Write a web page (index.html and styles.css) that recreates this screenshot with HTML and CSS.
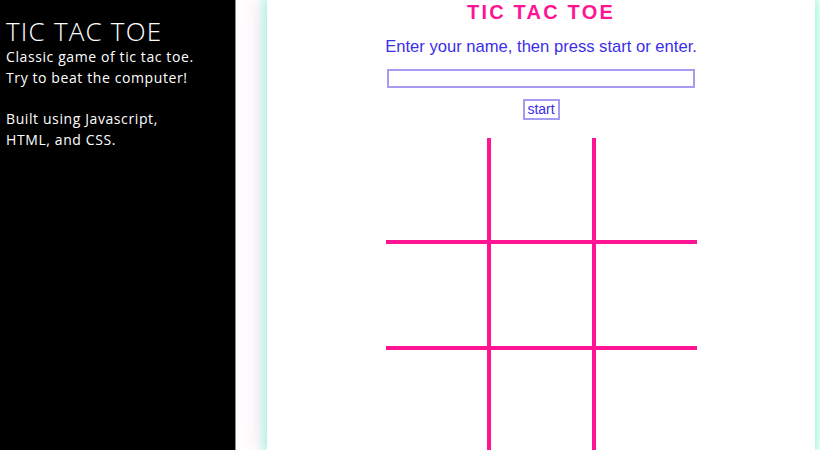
FILE: index.html
```html
<!DOCTYPE html>
<html>
<head>
<meta charset="utf-8">
<title>Tic Tac Toe</title>
<link rel="stylesheet" href="styles.css">
</head>
<body>
<aside class="sidebar">
  <h1 class="side-title">TIC TAC TOE</h1>
  <p class="side-text">Classic game of tic tac toe.<br>Try to beat the computer!</p>
  <p class="side-text">Built using Javascript,<br>HTML, and CSS.</p>
</aside>
<main class="stage">
  <section class="panel">
    <h2 class="game-title">TIC TAC TOE</h2>
    <p class="prompt">Enter your name, then press start or enter.</p>
    <input class="name-input" type="text">
    <button class="start-btn">start</button>
    <div class="board">
      <div class="cell"></div><div class="cell"></div><div class="cell"></div>
      <div class="cell"></div><div class="cell"></div><div class="cell"></div>
      <div class="cell"></div><div class="cell"></div><div class="cell"></div>
    </div>
  </section>
</main>
</body>
</html>
```

FILE: styles.css
```css
html, body {
  margin: 0;
  padding: 0;
  height: 100%;
  overflow: hidden;
  background: #ffffff;
}

body {
  display: flex;
}

.sidebar {
  width: 236px;
  flex: 0 0 236px;
  height: 100vh;
  background: #000000;
  border-right: 1px solid #8a8a8a;
  color: #ffffff;
  font-family: "Open Sans", sans-serif;
  padding: 17px 0 0 6px;
  box-sizing: border-box;
}

.side-title {
  margin: 0;
  font-size: 26px;
  font-weight: 300;
  line-height: 29px;
  letter-spacing: 1.2px;
}

.side-text {
  margin: 0 0 20px 0;
  font-size: 14px;
  line-height: 21px;
  font-weight: 400;
  letter-spacing: 0.6px;
}

.stage {
  flex: 1;
  display: flex;
  padding: 0 5px 0 31px;
}

.panel {
  flex: 1;
  height: 100vh;
  background: #ffffff;
  box-shadow: 0 0 11px 3px #9cf5de, -16px 0 18px 0 rgba(255, 205, 235, 0.3);
  display: flex;
  flex-direction: column;
  align-items: center;
  font-family: "Liberation Sans", Arial, sans-serif;
}

.game-title {
  margin: 1px 0 0 0;
  font-size: 20px;
  line-height: 23px;
  font-weight: 700;
  letter-spacing: 2.2px;
  color: #ff1493;
}

.prompt {
  margin: 13px 0 0 0;
  font-size: 16.6px;
  line-height: 19px;
  color: #3b2ee8;
}

.name-input {
  margin: 13px 0 0 0;
  width: 308px;
  height: 22px;
  box-sizing: border-box;
  border: 2px solid #a59cf2;
  padding: 0 4px;
  background: #ffffff;
  outline: none;
}

.start-btn {
  margin: 11px 0 0 0;
  width: 37px;
  height: 21px;
  box-sizing: border-box;
  border: 2px solid #a59cf2;
  background: #ffffff;
  color: #3b2ee8;
  font-family: "Liberation Sans", Arial, sans-serif;
  font-size: 14px;
  padding: 0;
  line-height: 17px;
}

.board {
  margin: 18px 0 0 0;
  display: grid;
  grid-template-columns: 101px 101px 101px;
  grid-template-rows: 102px 102px 102px;
  gap: 4px;
  background: #ff1493;
}

.cell {
  background: #ffffff;
}
```
